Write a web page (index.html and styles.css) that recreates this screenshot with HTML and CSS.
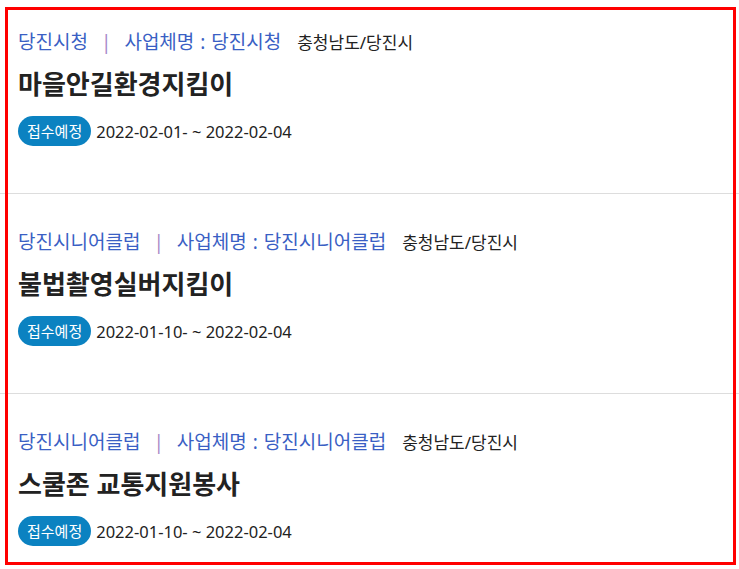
FILE: index.html
```html
<html>
  <head>
    <title>봉사활동 목록</title>
    <meta name="viewport" content="width=device-width, initial-scale=1">
    <link rel="stylesheet" href="styles.css">
  </head>
  <body>
    <ul class="list">
      <li class="item">
        <div class="meta">
          <span class="org">당진시청</span>
          <span class="sep">|</span>
          <span class="org">사업체명 : 당진시청</span>
          <span class="area">충청남도/당진시</span>
        </div>
        <h3 class="title">마을안길환경지킴이</h3>
        <div class="period">
          <span class="badge">접수예정</span>
          <span class="date">2022-02-01- ~ 2022-02-04</span>
        </div>
      </li>
      <li class="item">
        <div class="meta">
          <span class="org">당진시니어클럽</span>
          <span class="sep">|</span>
          <span class="org">사업체명 : 당진시니어클럽</span>
          <span class="area">충청남도/당진시</span>
        </div>
        <h3 class="title">불법촬영실버지킴이</h3>
        <div class="period">
          <span class="badge">접수예정</span>
          <span class="date">2022-01-10- ~ 2022-02-04</span>
        </div>
      </li>
      <li class="item">
        <div class="meta">
          <span class="org">당진시니어클럽</span>
          <span class="sep">|</span>
          <span class="org">사업체명 : 당진시니어클럽</span>
          <span class="area">충청남도/당진시</span>
        </div>
        <h3 class="title">스쿨존 교통지원봉사</h3>
        <div class="period">
          <span class="badge">접수예정</span>
          <span class="date">2022-01-10- ~ 2022-02-04</span>
        </div>
      </li>
    </ul>
    <!-- highlight frame drawn over the list -->
    <div class="frame"></div>
  </body>
</html>
```

FILE: styles.css
```css
body {
  margin: 0;
  background: #fff;
  font-family: "Noto Sans", "Noto Sans CJK KR", sans-serif;
  color: #222;
}

.list {
  margin: 0;
  padding: 0;
  list-style: none;
}

.item {
  padding: 35px 18px 47px;
  border-bottom: 1px solid #ddd;
}

.item:first-child {
  padding-top: 29px;
}

.meta {
  display: flex;
  align-items: baseline;
  height: 26px;
  line-height: 26px;
}

.org {
  color: #3a5fc4;
  font-size: 19px;
  word-spacing: 1px;
}

.sep {
  color: #a88ac8;
  font-size: 19px;
  margin: 0 13px;
}

.area {
  margin-left: 16px;
  font-size: 17px;
  color: #222;
}

.title {
  margin: 12px 0 15px;
  font-size: 26px;
  font-weight: bold;
  line-height: 34px;
  color: #222;
}

.period {
  display: flex;
  align-items: center;
  height: 30px;
}

.badge {
  display: inline-block;
  height: 30px;
  line-height: 30px;
  padding: 0 9px;
  border-radius: 15px;
  background: #0b82c1;
  color: #fff;
  font-size: 15px;
}

.date {
  margin-left: 5px;
  font-size: 16.5px;
  color: #222;
}

.frame {
  position: absolute;
  left: 5px;
  top: 7px;
  width: 725px;
  height: 552px;
  border: 3px solid #f00;
  pointer-events: none;
}
```
